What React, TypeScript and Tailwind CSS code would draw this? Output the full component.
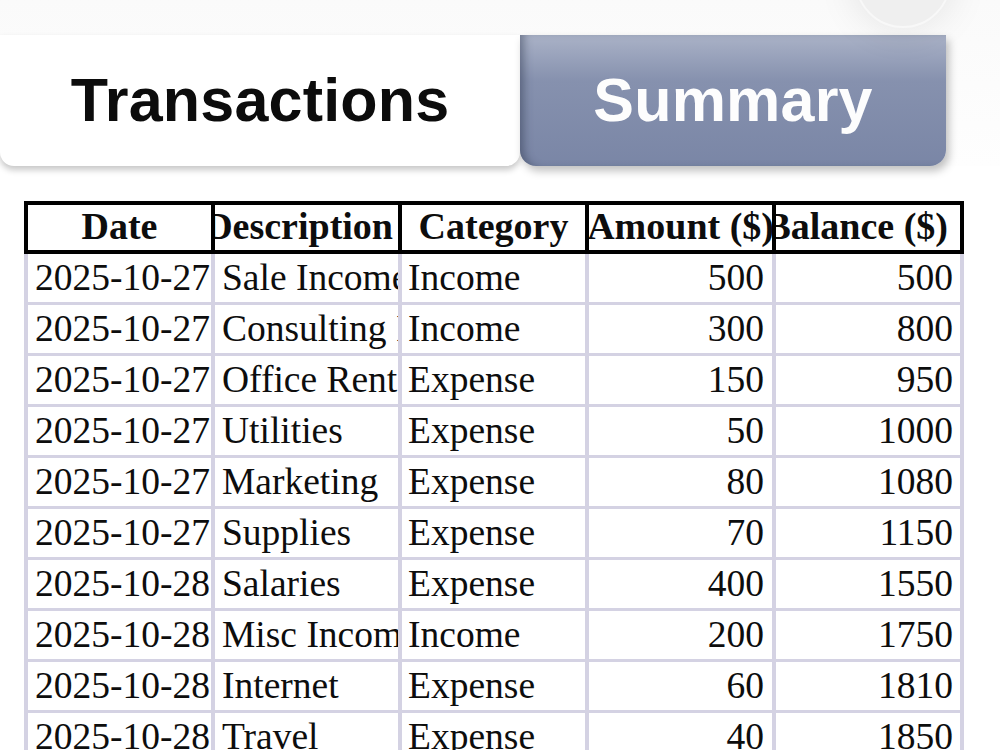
import React from "react";

type Row = {
  date: string;
  description: string;
  category: string;
  amount: number;
  balance: number;
};

const rows: Row[] = [
  { date: "2025-10-27", description: "Sale Income", category: "Income", amount: 500, balance: 500 },
  { date: "2025-10-27", description: "Consulting Income", category: "Income", amount: 300, balance: 800 },
  { date: "2025-10-27", description: "Office Rent", category: "Expense", amount: 150, balance: 950 },
  { date: "2025-10-27", description: "Utilities", category: "Expense", amount: 50, balance: 1000 },
  { date: "2025-10-27", description: "Marketing", category: "Expense", amount: 80, balance: 1080 },
  { date: "2025-10-27", description: "Supplies", category: "Expense", amount: 70, balance: 1150 },
  { date: "2025-10-28", description: "Salaries", category: "Expense", amount: 400, balance: 1550 },
  { date: "2025-10-28", description: "Misc Income", category: "Income", amount: 200, balance: 1750 },
  { date: "2025-10-28", description: "Internet", category: "Expense", amount: 60, balance: 1810 },
  { date: "2025-10-28", description: "Travel", category: "Expense", amount: 40, balance: 1850 },
];

function HeaderRow() {
  return (
    <div className="flex h-[53px] border-4 border-black bg-white font-bold text-[38px] leading-none">
      <div className="w-[183px] flex items-center justify-center pb-[4px] overflow-hidden whitespace-nowrap">
        Date
      </div>
      <div className="w-[187px] border-l-4 border-black flex items-center justify-end pr-[5px] pb-[4px] overflow-hidden whitespace-nowrap">
        <span className="shrink-0">Description</span>
      </div>
      <div className="w-[187px] border-l-4 border-black flex items-center justify-center pb-[4px] overflow-hidden whitespace-nowrap">
        Category
      </div>
      <div className="w-[187px] border-l-4 border-black flex items-center justify-end pb-[4px] overflow-hidden whitespace-nowrap">
        <span className="shrink-0 -mr-[2px]">Amount ($)</span>
      </div>
      <div className="flex-1 border-l-4 border-black flex items-center justify-end pr-[12px] pb-[4px] overflow-hidden whitespace-nowrap">
        <span className="shrink-0">Balance ($)</span>
      </div>
    </div>
  );
}

function BodyRow({ row }: { row: Row }) {
  return (
    <div className="flex h-[51px] border-x-4 border-b-[3px] border-[#d4d2e3] bg-white text-[37.5px] leading-none">
      <div className="w-[183px] flex items-center pl-[7px] overflow-hidden whitespace-nowrap">
        {row.date}
      </div>
      <div className="w-[187px] border-l-4 border-[#d4d2e3] flex items-center pl-[7px] overflow-hidden whitespace-nowrap">
        {row.description}
      </div>
      <div className="w-[187px] border-l-4 border-[#d4d2e3] flex items-center pl-[6px] overflow-hidden whitespace-nowrap">
        {row.category}
      </div>
      <div className="w-[187px] border-l-4 border-[#d4d2e3] flex items-center justify-end pr-2 overflow-hidden whitespace-nowrap">
        {row.amount}
      </div>
      <div className="flex-1 border-l-4 border-[#d4d2e3] flex items-center justify-end pr-[7px] overflow-hidden whitespace-nowrap">
        {row.balance}
      </div>
    </div>
  );
}

export default function App() {
  return (
    <div className="relative w-[1000px] h-[750px] overflow-hidden bg-white">
      {/* floating round button peeking from the top */}
      <div className="absolute left-[855px] top-[-68px] w-[96px] h-[96px] rounded-full bg-[#efefef] border-2 border-[#f8f8f8] shadow-[0_0_40px_rgba(0,0,0,0.1)]" />

      <div className="bg-linear-to-b from-[#fafafa] to-[#fefefe] pt-[35px]">
        <div className="flex h-[131px] font-['Liberation_Sans',Arial,sans-serif] font-bold text-[61px] tracking-[0.2px]">
          <div className="w-[520px] bg-white rounded-b-[14px] shadow-[0_4px_6px_rgba(0,0,0,0.22)] flex items-center justify-center text-[#0c0c0c]">
            Transactions
          </div>
          <div className="w-[426px] rounded-b-[16px] bg-linear-to-b from-[#aab2c7] from-0% via-[#8691ae] via-35% to-[#7a86a6] to-100% shadow-[inset_8px_0_8px_-4px_rgba(40,48,70,0.45),3px_5px_8px_rgba(0,0,0,0.25)] flex items-center justify-center text-[#fdfdfd]">
            Summary
          </div>
        </div>
      </div>

      <div className="mt-[35px] ml-[24px] w-[940px] font-['Liberation_Serif','Times_New_Roman',serif] text-[#0d0d0d]">
        <HeaderRow />
        {rows.map((row, i) => (
          <BodyRow key={i} row={row} />
        ))}
      </div>
    </div>
  );
}
